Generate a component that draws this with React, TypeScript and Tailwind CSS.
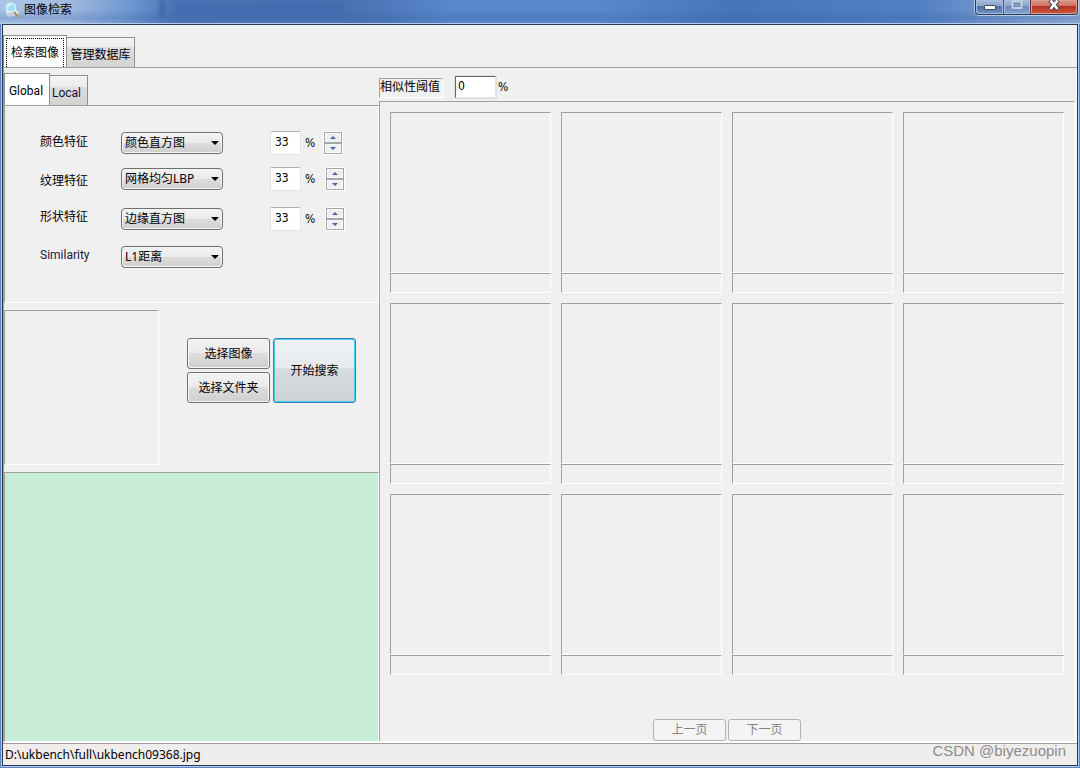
import type { ReactNode } from "react";

interface Feature {
  id: string;
  label: string;
  option: string;
  spacing: string;
  labelShift: string;
  percentWidth: string;
}

const features: Feature[] = [
  { id: "color", label: "颜色特征", option: "颜色直方图", spacing: "mt-6", labelShift: "pb-0.5", percentWidth: "w-[18px]" },
  { id: "texture", label: "纹理特征", option: "网格均匀LBP", spacing: "mt-3", labelShift: "pt-1", percentWidth: "w-5" },
  { id: "shape", label: "形状特征", option: "边缘直方图", spacing: "mt-4", labelShift: "pb-1", percentWidth: "w-5" },
];

const inset = "border border-t-[#a0a0a0] border-l-[#a0a0a0] border-r-white border-b-white";
const face = "bg-[linear-gradient(#f2f2f2_0%,#ebebeb_48%,#dddddd_50%,#cfcfcf_100%)]";
const digits = "font-['DejaVu_Sans_Condensed','Noto_Sans_CJK_SC',sans-serif]";
const latin = "font-['Roboto','Noto_Sans_CJK_SC',sans-serif]";

function TitleBar() {
  return (
    <header className="relative flex h-6 shrink-0 items-start justify-between bg-[linear-gradient(180deg,transparent_40%,#2f5ba040_75%,transparent_100%),linear-gradient(90deg,#a9c4e6_0%,#a3bce0_6%,#6f97d0_12%,#4a76b8_16%,#4873b5_33%,#5b88cc_42%,#5b88cc_55%,#4875b9_68%,#5180c6_85%,#6f93cb_91%,#92add6_100%)]">
      <div className="absolute top-0 left-40 h-4 w-1 bg-[#24508f] opacity-60 blur-[2px]" />
      <div className="absolute top-1 left-44 h-2 w-42 bg-[#2f5b9f] opacity-40 blur-[3px]" />
      <div className="flex items-center gap-1 pt-0.5 pl-1">
        <svg className="size-4" viewBox="0 0 16 16">
          <path d="M1 8.5l3 6.5 4-2 6 2 1-5-5-4z" fill="#e9edf3" stroke="#a7b4c4" strokeWidth="0.7" />
          <path d="M3 11l5-2 2 5-5 1z" fill="#c2cbe0" />
          <path d="M9.5 9.5l4 4.5" stroke="#a58068" strokeWidth="2" strokeLinecap="round" />
          <circle cx="7" cy="5.5" r="4.6" fill="#9edcf7" stroke="#e3f3fb" strokeWidth="1.4" />
          <path d="M4 5a3.2 3.2 0 0 1 4-2.5" fill="none" stroke="#e9faff" strokeWidth="1.3" />
        </svg>
        <h1 className="text-xs leading-4">图像检索</h1>
      </div>
      <div className="mr-0.5 flex h-[15px] rounded-b border border-t-0 border-[#24395c] shadow-[0_0_0_1px_#b9cdea]">
        <button aria-label="Minimize" className="flex w-7 justify-center rounded-bl border-r border-[#3d5278] bg-[linear-gradient(#a8bbd8_0%,#8ca5cb_40%,#4f70a5_45%,#7392c2_100%)] shadow-[inset_0_0_0_1px_#a9bddc]">
          <svg width="12" height="14" viewBox="0 0 12 14"><rect x="0.5" y="5.5" width="11" height="4" rx="0.5" fill="#fff" stroke="#434a5c" /></svg>
        </button>
        <button aria-label="Maximize" disabled className="flex w-[27px] justify-center border-r border-[#6b2b31] bg-[linear-gradient(#a8bbd8_0%,#8ea6cc_40%,#6d8abb_45%,#86a1cd_100%)] shadow-[inset_0_0_0_1px_#a9bddc]">
          <svg width="12" height="14" viewBox="0 0 12 14"><rect x="1.5" y="1" width="9" height="7" fill="none" stroke="#c0cde4" strokeWidth="2" /><rect x="3.5" y="3.5" width="5" height="3" fill="#8ea6cc" stroke="#6f86ae" /></svg>
        </button>
        <button aria-label="Close" className="flex w-[46px] justify-center rounded-br bg-[linear-gradient(#d99a8c_0%,#cb7566_40%,#b3301f_45%,#cf5a42_100%)] shadow-[inset_0_0_0_1px_#dd9c90]">
          <svg width="12" height="12" viewBox="0 0 12 12">
            <path d="M2 0L10 9.5M10 0L2 9.5" stroke="#4d4456" strokeWidth="4.6" />
            <path d="M2.5 0.5L9.5 9M9.5 0.5L2.5 9" stroke="#fff" strokeWidth="2.6" />
          </svg>
        </button>
      </div>
    </header>
  );
}

function Combo({ id, value }: { id: string; value: string }) {
  return (
    <div className="relative w-[102px]">
      <select id={id} className={`block h-[22px] w-full appearance-none rounded-sm border border-[#707070] pl-[3px] text-xs leading-5 shadow-[inset_0_0_0_1px_#f6f6f6] ${face}`}>
        <option>{value}</option>
      </select>
      <svg className="pointer-events-none absolute top-[9px] right-1" width="8" height="4" viewBox="0 0 8 4">
        <path d="M0 0h8L4 4z" fill="#000" />
      </svg>
    </div>
  );
}

function Spinner({ name }: { name: string }) {
  return (
    <div className="flex flex-col border border-white">
      <button aria-label={`${name} +`} className="flex h-[11px] w-[18px] items-center justify-center border border-[#a5a5ad] bg-[#eeeeee] shadow-[inset_0_0_0_1px_#fafafa]">
        <svg width="6" height="3" viewBox="0 0 6 3"><path d="M0 3L3 0L6 3z" fill="#4a62b0" /></svg>
      </button>
      <button aria-label={`${name} -`} className="flex h-[11px] w-[18px] items-center justify-center border border-[#a5a5ad] bg-[#eeeeee] shadow-[inset_0_0_0_1px_#fafafa]">
        <svg width="6" height="3" viewBox="0 0 6 3"><path d="M0 0L3 3L6 0z" fill="#4a62b0" /></svg>
      </button>
    </div>
  );
}

function PushButton({ children }: { children: ReactNode }) {
  return (
    <button className={`h-[31px] w-[83px] rounded-[3px] border border-[#707070] text-xs shadow-[inset_0_0_0_1px_#f8f8f8] ${face}`}>
      {children}
    </button>
  );
}

function FeaturePanel() {
  return (
    <div className="h-[197px] border-r border-b border-l border-white border-l-[#a0a0a0] pt-px text-xs">
      {features.map((feature) => (
        <div key={feature.id} className={`flex h-6 items-center pl-[35px] ${feature.spacing}`}>
          <label htmlFor={feature.id} className={`w-[81px] shrink-0 ${feature.labelShift}`}>{feature.label}</label>
          <Combo id={feature.id} value={feature.option} />
          <input aria-label={`${feature.label} %`} defaultValue="33" className={`ml-[47px] h-6 w-[31px] rounded-xs border border-[#e2e3ea] border-t-[#abadb3] bg-white pb-0.5 pl-1 text-xs ${digits}`} />
          <span className={`ml-1 ${feature.percentWidth} ${digits}`}>%</span>
          <Spinner name={feature.label} />
        </div>
      ))}
      <div className="mt-[14px] flex h-6 items-center pl-[35px]">
        <label htmlFor="similarity" className={`w-[81px] shrink-0 pb-1 text-[#1a1a3c] ${latin}`}>Similarity</label>
        <Combo id="similarity" value="L1距离" />
      </div>
    </div>
  );
}

function QueryPanel() {
  return (
    <div className="mt-[7px] flex items-start">
      <div className={`size-[155px] ${inset}`} />
      <div className="mt-7 ml-7 flex gap-[3px]">
        <div className="flex flex-col gap-[3px]">
          <PushButton>选择图像</PushButton>
          <PushButton>选择文件夹</PushButton>
        </div>
        <button className="w-[83px] rounded-[3px] border border-[#3c7fb1] bg-[linear-gradient(#f0f2f4_0%,#e6eaec_46%,#d6dcdf_47%,#cbd1d4_100%)] text-xs shadow-[inset_0_0_0_1px_#48cdf2]">
          开始搜索
        </button>
      </div>
    </div>
  );
}

function ResultCell() {
  return (
    <div>
      <div className={`h-[161px] ${inset}`} />
      <div className={`h-5 ${inset}`} />
    </div>
  );
}

function Results() {
  return (
    <section className="flex min-w-0 flex-1 flex-col">
      <div className="flex h-[33px] items-end pb-[3px] text-xs">
        <label htmlFor="threshold" className={`h-5 w-16 leading-4 ${inset}`}>相似性阈值</label>
        <input id="threshold" defaultValue="0" className={`ml-3 h-[22px] w-[41px] border border-[#e3e3e3] border-t-[#696969] border-l-[#696969] bg-white pb-0.5 pl-0.5 text-xs outline outline-[#dcdfe6] ${digits}`} />
        <span className={`ml-0.5 text-xs leading-[22px] ${digits}`}>%</span>
      </div>
      <div className="mr-px flex flex-1 flex-col border-t border-r border-l border-[#a0a0a0] border-r-white px-[10px] pt-[10px]">
        <div className="grid grid-cols-4 gap-[10px]">
          {Array.from({ length: 12 }, (_, index) => (
            <ResultCell key={index} />
          ))}
        </div>
        <div className="mt-11 flex justify-center gap-0.5">
          <button disabled className="h-[22px] w-[73px] rounded-[3px] border border-[#adb2b5] bg-[#f4f4f4] text-xs text-[#838383]">上一页</button>
          <button disabled className="h-[22px] w-[73px] rounded-[3px] border border-[#adb2b5] bg-[#f4f4f4] text-xs text-[#838383]">下一页</button>
        </div>
      </div>
    </section>
  );
}

export default function App() {
  return (
    <div className="flex min-h-screen flex-col bg-[#5b88c4] font-['Noto_Sans','Noto_Sans_CJK_SC',sans-serif] text-black">
      <TitleBar />
      <main className="relative mx-0.5 mb-0.5 flex flex-1 flex-col border border-[#26395a] bg-[#f0f0f0] shadow-[0_0_0_1px_#b4cbe9]">
        <nav className="mt-[10px] flex items-end border-b border-[#a0a0a0] text-xs">
          <button className="h-8 w-16 border border-b-0 border-[#8c8e94] bg-white p-0.5 pb-0">
            <span className="flex h-full items-center justify-center border border-b-0 border-dotted border-black">检索图像</span>
          </button>
          <button className="h-[30px] w-[68px] border border-b-0 border-l-0 border-[#8c8e94] bg-[linear-gradient(#f4f4f4_0%,#ebebeb_30%,#dddddd_32%,#d3d3d3_100%)] pt-1">管理数据库</button>
        </nav>
        <div className="flex flex-1 border-r border-b-2 border-l border-white border-l-[#a0a0a0]">
          <section className="flex w-[375px] shrink-0 flex-col">
            <nav className={`mt-[5px] flex items-end border-b border-[#a0a0a0] text-xs ${latin}`}>
              <button className="h-8 w-[46px] border border-b-0 border-[#8c8e94] bg-white pt-0.5 pr-0.5">Global</button>
              <button className="h-[30px] w-[38px] border border-b-0 border-l-0 border-[#8c8e94] bg-[linear-gradient(#f4f4f4_0%,#ebebeb_38%,#dddddd_40%,#d3d3d3_100%)] pt-1 pr-1 text-[#101040]">Local</button>
            </nav>
            <FeaturePanel />
            <QueryPanel />
            <div className="mt-[7px] flex-1 border-t border-r border-l border-[#a0a0a0] border-r-white bg-[#c7edd8]" />
          </section>
          <Results />
        </div>
        <footer className="flex h-[22px] shrink-0 items-center justify-between border-t border-[#a0a0a0] bg-[#f0eeed] pr-[11px] pl-0.5 text-xs">
          <span>D:\ukbench\full\ukbench09368.jpg</span>
          <span className="pb-2 font-['Liberation_Sans',sans-serif] text-[15px] leading-4 text-[#8c8c8c]">CSDN @biyezuopin</span>
        </footer>
      </main>
    </div>
  );
}
